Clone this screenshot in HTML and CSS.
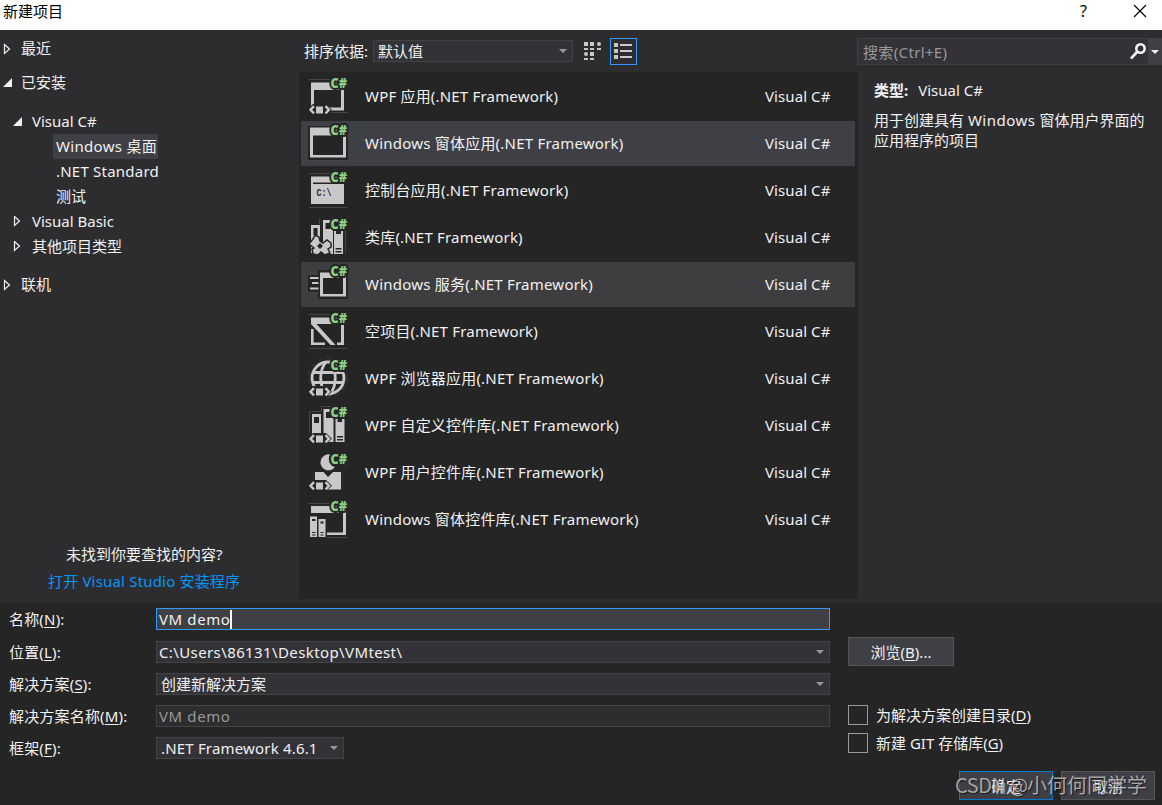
FILE: index.html
```html
<!DOCTYPE html>
<html lang="zh-CN">
<head>
<meta charset="utf-8">
<title>新建项目</title>
<link rel="stylesheet" href="styles.css">
</head>
<body>
<svg class="defs" width="0" height="0">
  <defs>
    <g id="cs"><text class="cs" x="29.5" y="13.5" textLength="16.5" lengthAdjust="spacingAndGlyphs">C#</text></g>
    <g id="tag"><path class="halo" d="M6 35.8L12 30H25L31 35.800L25 41H12z"/><path class="ln" d="M13 32.200L9.500 35.800L13 39.400M24.500 32.200L28 35.800L24.500 39.400"/><path class="f" d="M15 32.500h7v7h-7z"/></g>
  </defs>
</svg>
<div class="dialog">
  <header class="title"><span>新建项目</span><span class="help">?</span>
    <svg class="close" width="14" height="14" viewBox="0 0 14 14"><path d="M1 1L13 13M13 1L1 13"/></svg>
  </header>
  <main class="main">
    <nav class="tree">
      <div class="node top"><svg class="arr" width="10" height="12"><path class="shut" d="M1.500 1.500L6.500 6L1.500 10.500z"/></svg><span>最近</span></div>
      <div class="node inst"><svg class="arr" width="10" height="12"><path class="open" d="M9 1V10H0z"/></svg><span>已安装</span></div>
      <div class="node l1 vc"><svg class="arr" width="10" height="12"><path class="open" d="M9 1V10H0z"/></svg><span>Visual C#</span></div>
      <div class="node l2"><span class="sel">Windows 桌面</span></div>
      <div class="node l2"><span class="std">.NET Standard</span></div>
      <div class="node l2"><span>测试</span></div>
      <div class="node l1"><svg class="arr" width="10" height="12"><path class="shut" d="M1.500 .5L6.500 5L1.500 9.500z"/></svg><span>Visual Basic</span></div>
      <div class="node l1"><svg class="arr" width="10" height="12"><path class="shut" d="M1.500 .5L6.500 5L1.500 9.500z"/></svg><span>其他项目类型</span></div>
      <div class="node online"><svg class="arr" width="10" height="12"><path class="shut" d="M1.500 1.500L6.500 6L1.500 10.500z"/></svg><span>联机</span></div>
      <div class="missing">未找到你要查找的内容?</div>
      <div class="link">打开 Visual Studio 安装程序</div>
    </nav>
    <section class="center">
      <div class="bar">
        <span class="sort">排序依据:</span>
        <div class="combo sortbox"><span>默认值</span><i class="dd"></i></div>
        <svg class="grid" width="18" height="18" viewBox="0 0 18 18"><path d="M0 0h4v4H0zM6 0h4v4H6zM0 6h4v2H0zM6 6h4v2H6zM13 6h4v2h-4zM6 10h4v4H6zM0 16h4v2H0zM6 16h4v2H6z"/><circle cx="15" cy="2" r="2"/><circle cx="2" cy="12" r="2"/></svg>
        <div class="viewbtn"><svg width="18" height="18" viewBox="0 0 18 18"><path d="M0 0h4v4H0zM0 6h4v4H0zM0 12h4v4H0zM6 1h12v2H6zM6 7h12v2H6zM6 13h12v2H6z"/></svg></div>
      </div>
      <div class="list">
        <div class="row"><svg class="ic" viewBox="0 0 54 45"><path class="thin" d="M8 5.500H30M30 38.500H47"/><path class="f" fill-rule="evenodd" d="M10 8.500H43V36.500H10zM13 16V33.500H40V16z"/><use href="#tag"/><use href="#cs"/></svg><span>WPF 应用(.NET Framework)</span><em>Visual C#</em></div>
        <div class="row active win"><svg class="ic" viewBox="0 0 54 45"><path class="halof" d="M7 4H47V39H7z"/><path class="thin" d="M7 4.500H31M7 39.500H47"/><path class="f" fill-rule="evenodd" d="M9 6.500H45V36.500H9zM12 14.500V34H42V14.500z"/><use href="#cs"/></svg><span>Windows 窗体应用(.NET Framework)</span><em>Visual C#</em></div>
        <div class="row"><svg class="ic" viewBox="0 0 54 45"><path class="thin" d="M8 5.500H30M8 39.500H46"/><path class="f" d="M10 8.500H43V36H10z"/><path class="halof" d="M12 14.500H40V16H12z"/><text class="cmd" x="15.500" y="27.500" textLength="15" lengthAdjust="spacingAndGlyphs">C:\</text><use href="#cs"/></svg><span>控制台应用(.NET Framework)</span><em>Visual C#</em></div>
        <div class="row"><svg class="ic" viewBox="0 0 54 45"><path class="thin" d="M18.500 4V9M44.500 14V38"/><path class="f" fill-rule="evenodd" d="M10 10H19V38H10zM12.500 13V20H16.500V13zM22 5H32V39H22zM24.500 8V14H29V8zM33 12H42V39H33zM35 15V19H40V15zM34.500 33V34.500H40.500V33zM34.500 36V37.500H40.500V36z"/><path class="puz" d="M14 20L18 22L19 26L22 28L26 25L30 28V32L27 34L29 38L24 40L20 37L17 40L12 39L11 34L13 33L8 29L12 24z"/><path class="halof" d="M19 28L22 31L19 34L16 31z"/><use href="#cs"/></svg><span>类库(.NET Framework)</span><em>Visual C#</em></div>
        <div class="row hover win"><svg class="ic" viewBox="0 0 54 45"><path class="halof" d="M7 12H17V8H47V37.500H17V30H7z"/><path class="thin" d="M7 12.500H17M17 38H47M7 30.500H17"/><path class="f" fill-rule="evenodd" d="M19 10.500H45V34.500H19zM22 16V32H42V16zM9 15H17.500V17H9zM11 20H17.500V22H11zM9 25.500H17.500V27.500H9z"/><use href="#cs"/></svg><span>Windows 服务(.NET Framework)</span><em>Visual C#</em></div>
        <div class="row"><svg class="ic" viewBox="0 0 54 45"><path class="thin" d="M8 5.500H30M8 39.500H46"/><path class="f" d="M10 8.500H43V36H36V33.500H40V15H15.500L34.500 36H29.500L10 15z"/><path class="ell" d="M11.300 20V34.700H24"/><use href="#cs"/></svg><span>空项目(.NET Framework)</span><em>Visual C#</em></div>
        <div class="row"><svg class="ic" viewBox="0 0 54 45"><circle class="dot" cx="27" cy="21.500" r="19.500"/><circle class="gl" cx="27" cy="22" r="16"/><path class="gl" d="M25 6C18 14 18 30 25 38M29 6C36 14 36 30 29 38M12 16.500H42M12 26.500H42"/><use href="#tag"/><use href="#cs"/></svg><span>WPF 浏览器应用(.NET Framework)</span><em>Visual C#</em></div>
        <div class="row"><svg class="ic" viewBox="0 0 54 45"><path class="thin" d="M8.500 30V8.500H20.500V3.500H30"/><path class="f" fill-rule="evenodd" d="M11 11H20V33H11zM13 14V20H18V14zM22.500 6H32.500V39H22.500zM25 9V15H30V9zM34.500 13H43.500V39H34.500zM36.500 15V19H41V15zM36 33V34.500H42V33zM36 36V37.500H42V36z"/><use href="#tag"/><use href="#cs"/></svg><span>WPF 自定义控件库(.NET Framework)</span><em>Visual C#</em></div>
        <div class="row"><svg class="ic" viewBox="0 0 54 45"><path class="f" d="M29 4.500A8 8 0 1 0 34 17C29 16 26 10 29 4.500zM14 22H22.500L27 27L32 22H40V39.500H14z"/><path class="thin" d="M36 15.500H46"/><use href="#tag"/><use href="#cs"/></svg><span>WPF 用户控件库(.NET Framework)</span><em>Visual C#</em></div>
        <div class="row win"><svg class="ic" viewBox="0 0 54 45"><path class="thin" d="M7 6.500H29M26 40.500H47"/><path class="f" fill-rule="evenodd" d="M10 9H45V38H26V35.500H42V16H10zM9 19.500H16V40H9zM11 22V24H14.500V22zM11 35V36H14.500V35zM11 37.500V38.500H14.500V37.500zM17.500 22H24.500V40H17.500zM19.500 24.500V26.500H22.500V24.500zM19.500 35V36H22.500V35zM19.500 37.500V38.500H22.500V37.500z"/><use href="#cs"/></svg><span>Windows 窗体控件库(.NET Framework)</span><em>Visual C#</em></div>
      </div>
    </section>
    <aside class="info">
      <div class="search"><span>搜索(Ctrl+E)</span>
        <svg width="16" height="17" viewBox="0 0 16 17"><circle cx="10.500" cy="5.500" r="4.200"/><path d="M7 9L1 15.500"/></svg><b><i class="dd"></i></b></div>
      <p class="type"><strong>类型:</strong><span>Visual C#</span></p>
      <p class="desc">用于创建具有 <span>Windows</span> 窗体用户界面的<br>应用程序的项目</p>
    </aside>
  </main>
  <footer class="form">
    <div class="fields">
      <label>名称(<u>N</u>):</label><div class="combo focus"><span class="vm">VM demo</span><i class="caret"></i></div>
      <label>位置(<u>L</u>):</label><div class="combo"><span class="path">C:\Users\86131\Desktop\VMtest\</span><i class="dd"></i></div>
      <label>解决方案(<u>S</u>):</label><div class="combo in"><span>创建新解决方案</span><i class="dd"></i></div>
      <label>解决方案名称(<u>M</u>):</label><div class="combo off"><span class="vm">VM demo</span></div>
      <label>框架(<u>F</u>):</label><div class="combo in fw"><span>.NET Framework 4.6.1</span><i class="dd"></i></div>
    </div>
    <div class="side">
      <div class="btn browse">浏览(<u>B</u>)...</div>
      <div class="check"><i></i><span>为解决方案创建目录(<u>D</u>)</span></div>
      <div class="check"><i></i><span>新建 GIT 存储库(<u>G</u>)</span></div>
      <div class="actions"><div class="btn ok">确定</div><div class="btn">取消</div></div>
    </div>
  </footer>
  <div class="mark"><span>CSDN @</span>小何何同学学</div>
</div>
</body>
</html>
```
FILE: styles.css
```css
* { box-sizing: border-box; }
body { margin: 0; font: 15px/20px "Noto Sans", "Noto Sans CJK SC", sans-serif; color: #f1f1f1; background: #252526; overflow: hidden; }
p { margin: 0; }
i, em { font-style: normal; }
u { text-underline-offset: 2px; text-decoration-thickness: 1px; }
.defs { position: absolute; }
.dialog { position: relative; width: 1162px; height: 805px; display: flex; flex-direction: column; white-space: nowrap; }
.title { height: 30px; background: #fff; color: #000; display: flex; align-items: center; padding: 0 15px 8px 3px; }
.help { margin-left: auto; font-size: 16px; }
.close { margin-left: 46px; }
.close path { stroke: #000; stroke-width: 1.2; fill: none; }
.main { height: 573px; background: #2d2d30; display: flex; border-top: 1px solid #29292b; }
.tree { width: 299px; display: flex; flex-direction: column; padding-top: 5px; }
.node { height: 25px; display: flex; align-items: center; padding-left: 3px; flex: none; }
.node span { height: 25px; line-height: 24px; }
.arr { width: 10px; margin-right: 8px; flex: none; }
.shut { fill: none; stroke: #f1f1f1; stroke-width: 1.2; }
.open { fill: #f1f1f1; }
.inst { margin-top: 9px; }
.vc { margin-top: 14px; }
.l1 { padding-left: 13px; }
.l1 .arr { margin-right: 9px; }
.l2 { padding-left: 53px; }
.l2 span { padding: 0 3px; }
.l2 .sel { background: #3f3f46; letter-spacing: .32px; padding-right: 1px; margin-top: -1px; }
.node .sel { line-height: 25px; }
.std { letter-spacing: .22px; }
.online { margin-top: 13px; }
.missing { margin-top: auto; padding-left: 66px; }
.link { margin: 7px 0 12px 48px; color: #0097fb; letter-spacing: .18px; }
.center { width: 559px; }
.bar { height: 41px; display: flex; align-items: center; padding-left: 5px; }
.sort { width: 69px; padding-bottom: 2px; }
.combo { height: 22px; border: 1px solid #434346; background: #333337; display: flex; align-items: center; padding: 0 5px 0 2px; line-height: 20px; }
.dd { margin-left: auto; border: 4px solid transparent; border-top-color: #999; border-bottom: 0; }
.sortbox { width: 200px; padding-left: 4px; margin-top: -1px; }
.grid { margin-left: 11px; margin-top: -1px; fill: #c8c8c8; }
.viewbtn { margin-left: 8px; width: 27px; height: 27px; border: 1px solid #3399ff; display: flex; align-items: center; padding-left: 3px; }
.viewbtn svg { fill: #c8c8c8; }
.list { height: 527px; background: #252526; padding: 2px 3px 0 2px; display: flex; flex-direction: column; gap: 2px; }
.row { height: 45px; display: flex; align-items: center; padding-right: 24px; flex: none; }
.row > span { padding-bottom: 2px; letter-spacing: .19px; }
.row.win > span { letter-spacing: .22px; }
.row em { margin-left: auto; width: 66px; padding-bottom: 2px; letter-spacing: .08px; }
.active { background: #3f3f46; }
.hover { background: #3e3e40; }
.ic { width: 54px; height: 45px; margin-right: 10px; flex: none; }
.f { fill: #c8c8c8; }
.halo, .halof { fill: #252526; }
.ln { fill: none; stroke: #c8c8c8; stroke-width: 2.4; }
.ell { fill: none; stroke: #c8c8c8; stroke-width: 2.6; }
.thin { fill: none; stroke: #46464a; stroke-width: 1; }
.puz { fill: #c8c8c8; stroke: #252526; stroke-width: 1.5; }
.gl { fill: none; stroke: #c8c8c8; stroke-width: 2.8; }
.dot { fill: none; stroke: #3b3b3e; stroke-dasharray: 5 4; }
.cs { font: 900 13.5px "Noto Sans", sans-serif; fill: #89d185; stroke: #252526; stroke-width: 4px; paint-order: stroke; stroke-linejoin: round; }
.cmd { font: bold 10px "Liberation Mono", monospace; fill: #252526; }
.info { width: 304px; }
.search { margin-top: 7px; height: 27px; width: 305px; margin-left: -1px; border: 1px solid #3f3f46; background: #333337; display: flex; align-items: center; padding-left: 5px; color: #999; }
.search span { letter-spacing: .35px; }
.search svg { margin-left: auto; margin-right: 2px; fill: none; stroke: #f1f1f1; stroke-width: 2.6; }
.search b { width: 13px; height: 25px; background: #3f3f46; display: flex; align-items: center; }
.search b .dd { margin: 0 0 0 3px; border-top-color: #f1f1f1; }
.type { margin: 15px 0 0 16px; display: flex; gap: 10px; }
.desc { margin: 10px 0 0 16px; }
.desc span { letter-spacing: .5px; }
.form { flex: 1; display: flex; padding-top: 5px; background: #252526; }
.fields { width: 830px; display: grid; grid-template-columns: 147px 1fr; grid-auto-rows: 22px; row-gap: 10px; padding: 1px 0 0 9px; align-items: center; align-content: start; }
.fields label { letter-spacing: .18px; }
.focus { border-color: #3399ff; background: #3f3f46; }
.fields label:first-child, .fields .focus { position: relative; top: -1px; }
.caret { width: 2px; height: 19px; background: #fff; }
.vm { letter-spacing: .6px; }
.focus .vm { margin-right: -1px; }
.path { letter-spacing: .39px; }
.fw span { letter-spacing: .18px; }
.off { background: #2d2d30; color: #999; }
.in { padding-left: 4px; }
.fw { width: 188px; }
.side { flex: 1; padding: 29px 7px 0 18px; display: flex; flex-direction: column; }
.btn { width: 94px; height: 29px; border: 1px solid #555; background: #3f3f46; display: flex; align-items: center; justify-content: center; }
.browse { width: 106px; margin-bottom: 39px; }
.check { height: 20px; margin-bottom: 8px; display: flex; align-items: center; gap: 8px; }
.check i { width: 20px; height: 20px; border: 1px solid #999; }
.actions { display: flex; justify-content: flex-end; gap: 8px; margin-top: 10px; }
.ok { border-color: #007acc; }
.mark { position: absolute; left: 955px; top: 771px; font: 20px/28px "Noto Sans CJK SC", sans-serif; color: rgba(215,215,215,.72); text-shadow: 1px 1px 1px rgba(0,0,0,.6); display: flex; }
.mark span { width: 72px; letter-spacing: -.5px; }
```
